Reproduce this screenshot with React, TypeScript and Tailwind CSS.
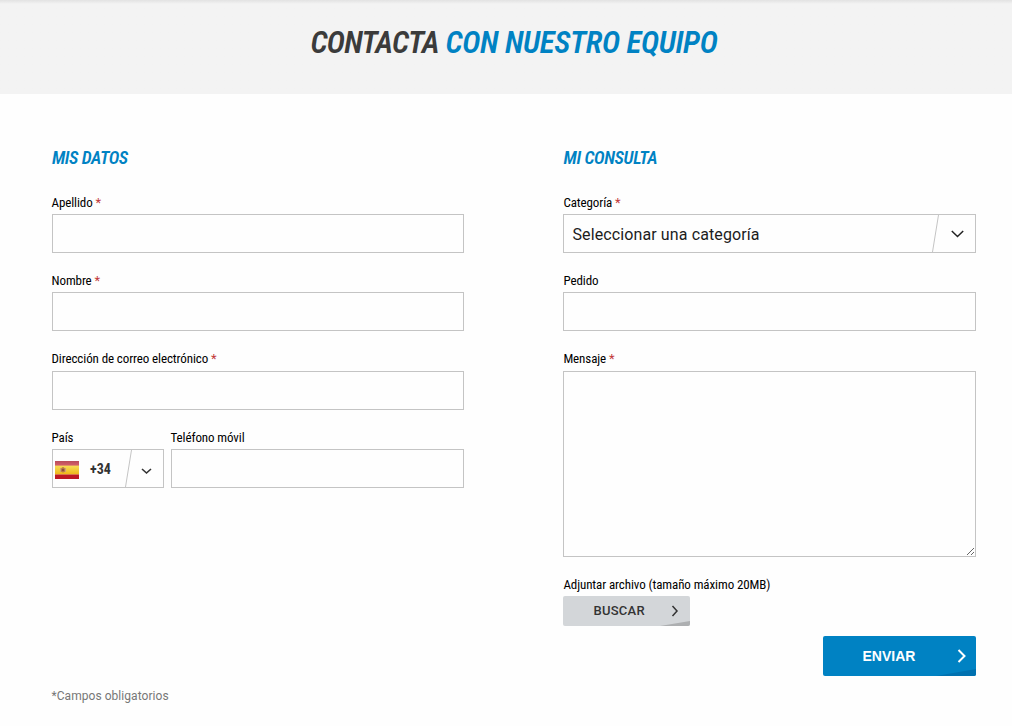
import React from "react";

const condensed = "font-['Roboto_Condensed','Roboto',sans-serif] [font-stretch:75%]";

function Label({ text, required, className = "" }: { text: string; required?: boolean; className?: string }) {
  return (
    <span className={`${condensed} ${className} block h-[21px] whitespace-nowrap pt-px text-[13px] leading-5 tracking-[-0.1px] text-black`}>
      {text}
      {required && <span className="text-[#c23a3a]"> *</span>}
    </span>
  );
}

function Field({ text, required, labelClass }: { text: string; required?: boolean; labelClass?: string }) {
  return (
    <label className="block">
      <Label text={text} required={required} className={labelClass} />
      <input className="mt-px block h-[39px] w-full border border-[#c4c4c4] bg-[#fefefe] px-2 outline-none" />
    </label>
  );
}

function Divider() {
  return (
    <svg className="h-[37px] w-[7px] shrink-0" viewBox="0 0 7 37" fill="none">
      <path d="M6.5 0L.5 37" stroke="#c4c4c4" />
    </svg>
  );
}

export default function App() {
  return (
    <main className="h-[726px] w-full overflow-hidden bg-[#fefefe] font-['Roboto',sans-serif]">
      <header className="h-[94px] bg-[#f3f3f3] bg-linear-to-b from-[#e2e2e2] to-[#f3f3f3] to-[4px] pt-[23px] pl-[2px]">
        <h1 className={`${condensed} pl-[14px] text-center text-[31px] leading-10 font-semibold tracking-[-0.35px] whitespace-nowrap text-[#3b3b3b] italic`}>
          <span className="tracking-[-0.75px]">CONTACTA</span> <span className="text-[#0082c3]">CON NUESTRO EQUIPO</span>
        </h1>
      </header>
      <form className="grid grid-cols-[412px_413px] gap-x-[99px] pt-[52px] pl-[52px]" onSubmit={(e) => e.preventDefault()}>
        <section className="flex flex-col">
          <h2 className={`${condensed} h-[46px] text-[18px] leading-6 font-semibold tracking-[-0.4px] text-[#0082c3] italic`}>MIS DATOS</h2>
          <div className="flex flex-col gap-[17px]">
            <Field text="Apellido" required labelClass="-ml-[.5px]" />
            <Field text="Nombre" required labelClass="-ml-[.5px]" />
            <label className="block">
              <Label text="Dirección de correo electrónico" required className="-ml-[.5px]" />
              <input type="email" className="mt-[2px] block h-[39px] w-full border border-[#c4c4c4] bg-[#fefefe] px-2 outline-none" />
            </label>
            <div className="flex gap-[7px]">
              <div className="w-[112px]">
                <Label text="País" className="-ml-[.5px]" />
                <div className="mt-px flex h-[39px] items-center border border-[#c4c4c4] pl-[2px]">
                  <svg className="mt-[3px] h-[18px] w-6 shrink-0" viewBox="0 0 24 18">
                    <defs>
                      <linearGradient id="gold" x1="0" y1="0" x2="0" y2="1">
                        <stop stopColor="#f6df57" />
                        <stop offset="1" stopColor="#eeb416" />
                      </linearGradient>
                      <linearGradient id="red" x1="0" y1="0" x2="0" y2="1">
                        <stop stopColor="#b94d5a" />
                        <stop offset="1" stopColor="#d7626c" />
                      </linearGradient>
                    </defs>
                    <rect width="24" height="5" fill="url(#red)" />
                    <rect y="4.6" width="24" height="9" fill="url(#gold)" />
                    <rect y="13.5" width="24" height="4.5" fill="#bd1722" />
                    <path d="M5 7h1v4H5zM10 7h1v4h-1z" fill="#cda07a" />
                    <path d="M6 7.5q2-3 4 0v3q-2 2-4 0z" fill="#b77943" />
                    <path d="M7 8h2v2H7z" fill="#87503f" />
                  </svg>
                  <span className={`${condensed} mt-px ml-[11px] w-[35px] text-[14px] font-bold text-[#333]`}>+34</span>
                  <Divider />
                  <svg className="mt-[5px] ml-[9px] h-[7px] w-[11px]" viewBox="0 0 11 7" fill="none">
                    <path d="M1 1l4.5 4L10 1" stroke="#333" strokeWidth="1.6" />
                  </svg>
                </div>
              </div>
              <div className="w-[293px]">
                <Field text="Teléfono móvil" labelClass="-ml-[.5px]" />
              </div>
            </div>
          </div>
        </section>
        <section className="flex flex-col">
          <h2 className={`${condensed} h-[46px] pl-[.5px] text-[18px] leading-6 font-semibold tracking-[-0.35px] text-[#0082c3] italic`}>MI CONSULTA</h2>
          <div className="flex flex-col gap-[17px]">
            <div>
              <Label text="Categoría" required className="pl-[.4px]" />
              <div className="mt-px flex h-[39px] items-center border border-[#c4c4c4] pl-[8.5px] text-[16px] text-[#1c1c1c]">
                <span className="mt-[2px] w-[359.5px] tracking-[.11px] whitespace-nowrap">Seleccionar una categoría</span>
                <Divider />
                <svg className="ml-[12px] h-[8px] w-[14px]" viewBox="0 0 14 8" fill="none">
                  <path d="M.8 1l5.7 5.5L12.2 1" stroke="#222" strokeWidth="1.5" />
                </svg>
              </div>
            </div>
            <Field text="Pedido" labelClass="pl-[.4px]" />
            <label className="block">
              <Label text="Mensaje" required className="pl-[.4px]" />
              <textarea className="mt-[2px] block h-[186px] w-full resize border border-[#c4c4c4] bg-[#fefefe] outline-none" />
            </label>
          </div>
          <div className="mt-[17px]">
            <Label text="Adjuntar archivo (tamaño máximo 20MB)" className="pl-[.4px]" />
          </div>
          <button type="button" className="mt-px grid h-[30px] w-[127px] grid-cols-1 overflow-hidden rounded-[2px] bg-[#d3d6d9] text-[#333]">
            <svg className="col-start-1 row-start-1 h-[30px] w-[127px]" viewBox="0 0 127 30" fill="none">
              <path d="M97 30L127 25V30Z" fill="#adafb1" />
              <path d="M109.5 10l4.5 5-4.5 5" stroke="#333" strokeWidth="1.5" />
            </svg>
            <span className="col-start-1 row-start-1 mt-[5px] ml-[30.5px] text-left text-[13px] leading-5 font-medium tracking-[.25px]">BUSCAR</span>
          </button>
          <button type="submit" className="mt-[10px] grid h-10 w-[153px] grid-cols-1 self-end overflow-hidden rounded-[2px] bg-[#0082c3] text-white">
            <svg className="col-start-1 row-start-1 h-10 w-[153px]" viewBox="0 0 153 40" fill="none">
              <path d="M113 40L153 33V40Z" fill="#0071b0" />
              <path d="M135.5 14l6 6-6 6" stroke="#fff" strokeWidth="2" />
            </svg>
            <span className="col-start-1 row-start-1 mt-[10px] ml-[39.5px] text-left font-['Liberation_Sans',sans-serif] text-[14px] leading-5 font-bold">ENVIAR</span>
          </button>
        </section>
      </form>
      <p className="mt-[10px] pl-[51.5px] text-[12px] leading-5 tracking-[.05px] text-[#777]">*Campos obligatorios</p>
    </main>
  );
}
